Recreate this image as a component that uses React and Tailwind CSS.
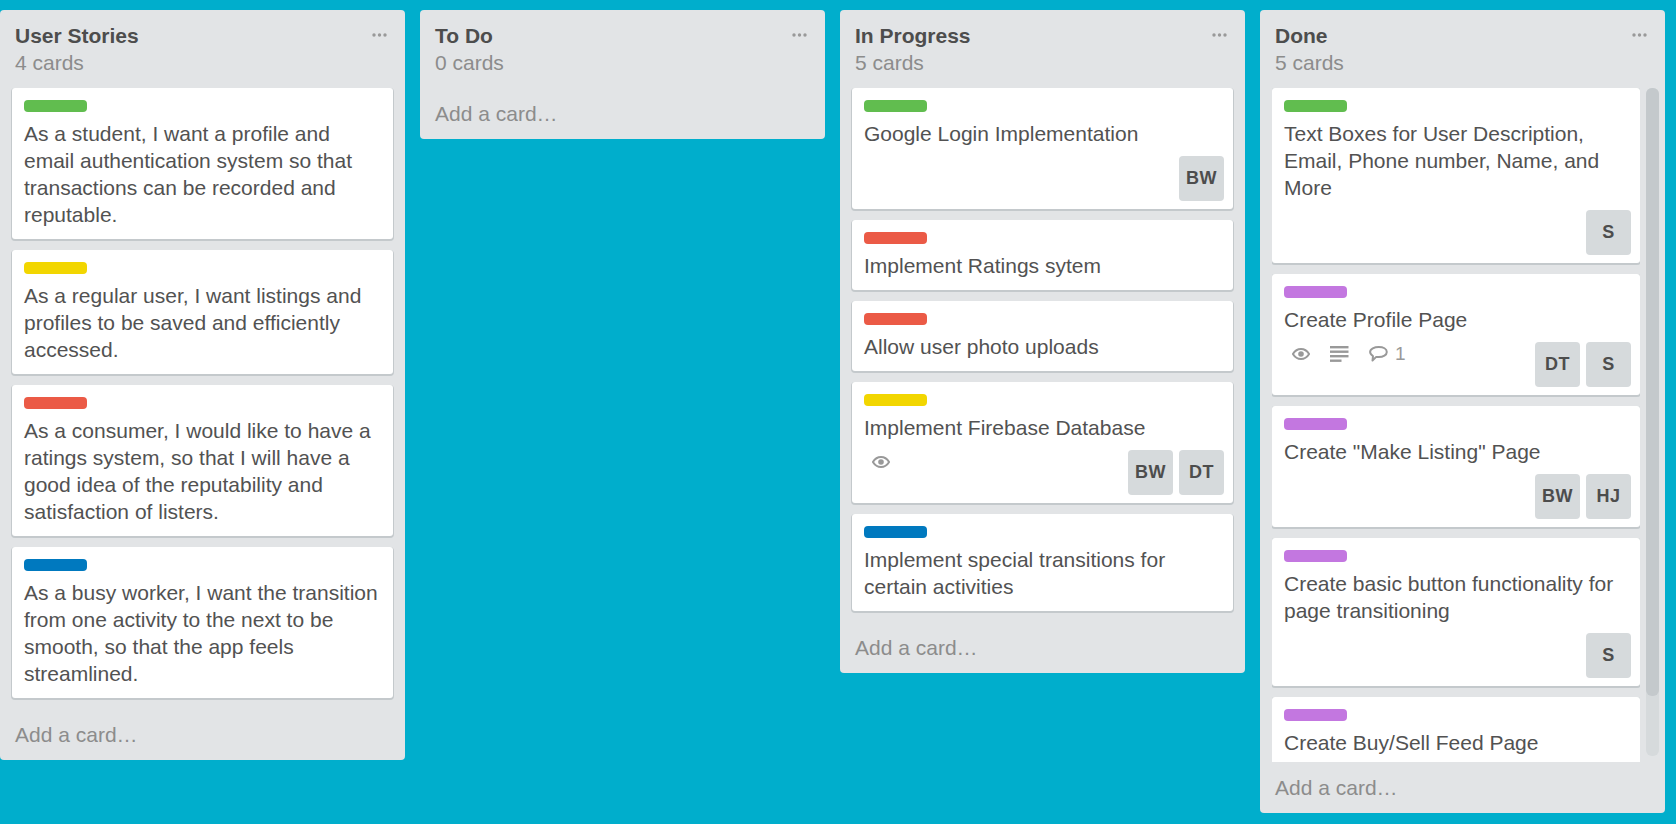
const GREEN = "bg-[#61bd4f]";
const YELLOW = "bg-[#f2d600]";
const RED = "bg-[#eb5a46]";
const BLUE = "bg-[#0079bf]";
const PURPLE = "bg-[#c377e0]";

function Dots() {
  return (
    <svg width="15" height="4" viewBox="0 0 15 4" className="block">
      <circle cx="2" cy="2" r="1.7" fill="#999" />
      <circle cx="7.5" cy="2" r="1.7" fill="#999" />
      <circle cx="13" cy="2" r="1.7" fill="#999" />
    </svg>
  );
}

function Eye() {
  return (
    <svg width="18" height="12" viewBox="0 0 18 12" className="block">
      <path d="M.9 6C3 2.6 5.8 1 9 1s6 1.6 8.1 5c-2.1 3.4-4.9 5-8.1 5S3 9.4.9 6Z" fill="none" stroke="#999" strokeWidth="2" />
      <circle cx="9" cy="6" r="2.8" fill="#999" />
    </svg>
  );
}

function Lines() {
  return (
    <svg width="19" height="16" viewBox="0 0 19 16" className="block">
      <rect x="0" y="0" width="18.5" height="2.4" fill="#999" />
      <rect x="0" y="4.5" width="18.5" height="2.4" fill="#999" />
      <rect x="0" y="9" width="18.5" height="2.4" fill="#999" />
      <rect x="0" y="13.5" width="11.5" height="2.4" fill="#999" />
    </svg>
  );
}

function Comment() {
  return (
    <svg width="19" height="16" viewBox="0 0 19 16" className="block">
      <path d="M9.8 1.1c4.4 0 8 1.9 8 5 0 3-3.6 5-8 5-.9 0-1.8 0-2.6-.2l-3.7 3.6.5-4.5C2.3 9 1.1 7.7 1.1 6.1c0-3.1 4.3-5 8.7-5Z" fill="none" stroke="#999" strokeWidth="2" strokeLinejoin="round" />
    </svg>
  );
}

function Avatar({ text }) {
  return (
    <div className="w-[45px] h-[45px] rounded-[4px] bg-[#d6dadc] flex items-center justify-center text-[18px] tracking-[0.4px] font-bold text-[#4d4d4d]">
      {text}
    </div>
  );
}

function Card({ label, text, avatars, badges }) {
  return (
    <div className="bg-white rounded-[3px] shadow-[0_1px_0_1px_#c4c9cc] [clip-path:inset(0_-2px_-2px_-2px)] mb-[11px] pt-3 pl-3 pr-[9px] pb-[11px] shrink-0">
      <div className={`w-[63px] h-3 rounded-[4px] ${label}`} />
      <div className="mt-2 text-[21px] leading-[27px] text-[#525252]">{text}</div>
      {avatars && (
        <div className="mt-[9px] -mb-[3px] flex justify-between items-start">
          <div className="flex items-center h-[24px]">
            {badges && badges.includes("eye") && (
              <div className="ml-2 mr-[20px]">
                <Eye />
              </div>
            )}
            {badges && badges.includes("lines") && (
              <div className="mr-[20px]">
                <Lines />
              </div>
            )}
            {badges && badges.includes("comment") && (
              <div className="flex items-center gap-[7px]">
                <Comment />
                <span className="text-[19px] text-[#999]">1</span>
              </div>
            )}
          </div>
          <div className="flex gap-[6px]">
            {avatars.map((a) => (
              <Avatar key={a} text={a} />
            ))}
          </div>
        </div>
      )}
    </div>
  );
}

function Header({ title, count }) {
  return (
    <div className="pt-3 pb-3 pl-[15px] pr-[18px] flex justify-between items-start shrink-0">
      <div>
        <div className="text-[21px] leading-[27px] font-bold text-[#4d4d4d]">{title}</div>
        <div className="text-[21px] leading-[27px] text-[#8c8c8c]">{count}</div>
      </div>
      <div className="mt-[11px]">
        <Dots />
      </div>
    </div>
  );
}

function AddCard() {
  return <div className="pt-3 pb-3 pl-[15px] text-[21px] leading-[27px] text-[#8c8c8c] shrink-0">Add a card…</div>;
}

function List({ title, count, cards }) {
  return (
    <div className="w-[405px] shrink-0 bg-[#e2e4e6] rounded-[4px]">
      <Header title={title} count={count} />
      {cards.length > 0 && (
        <div className="px-3">
          {cards.map((c) => (
            <Card key={c.text} {...c} />
          ))}
        </div>
      )}
      <AddCard />
    </div>
  );
}

const stories = [
  { label: GREEN, text: "As a student, I want a profile and email authentication system so that transactions can be recorded and reputable." },
  { label: YELLOW, text: "As a regular user, I want listings and profiles to be saved and efficiently accessed." },
  { label: RED, text: "As a consumer, I would like to have a ratings system, so that I will have a good idea of the reputability and satisfaction of listers." },
  { label: BLUE, text: "As a busy worker, I want the transition from one activity to the next to be smooth, so that the app feels streamlined." },
];

const progress = [
  { label: GREEN, text: "Google Login Implementation", avatars: ["BW"] },
  { label: RED, text: "Implement Ratings sytem" },
  { label: RED, text: "Allow user photo uploads" },
  { label: YELLOW, text: "Implement Firebase Database", avatars: ["BW", "DT"], badges: ["eye"] },
  { label: BLUE, text: "Implement special transitions for certain activities" },
];

const done = [
  { label: GREEN, text: "Text Boxes for User Description, Email, Phone number, Name, and More", avatars: ["S"] },
  { label: PURPLE, text: "Create Profile Page", avatars: ["DT", "S"], badges: ["eye", "lines", "comment"] },
  { label: PURPLE, text: 'Create "Make Listing" Page', avatars: ["BW", "HJ"] },
  { label: PURPLE, text: "Create basic button functionality for page transitioning", avatars: ["S"] },
  { label: PURPLE, text: "Create Buy/Sell Feed Page" },
];

function DoneList() {
  return (
    <div className="w-[405px] shrink-0 bg-[#e2e4e6] rounded-[4px]">
      <Header title="Done" count="5 cards" />
      <div className="flex h-[674px]">
        <div className="w-[368px] ml-3 overflow-hidden shrink-0">
          {done.map((c) => (
            <Card key={c.text} {...c} />
          ))}
        </div>
        <div className="ml-[6px] w-[13px] h-[668px] rounded-[6px] bg-[#d6dadc] shrink-0">
          <div className="h-[608px] rounded-[6px] bg-[#c4c9cc]" />
        </div>
      </div>
      <AddCard />
    </div>
  );
}

export default function App() {
  return (
    <div className="h-screen overflow-hidden bg-[#00aecc] pt-[10px] flex items-start gap-[15px] font-['Liberation_Sans',Arial,sans-serif]">
      <List title="User Stories" count="4 cards" cards={stories} />
      <List title="To Do" count="0 cards" cards={[]} />
      <List title="In Progress" count="5 cards" cards={progress} />
      <DoneList />
    </div>
  );
}
